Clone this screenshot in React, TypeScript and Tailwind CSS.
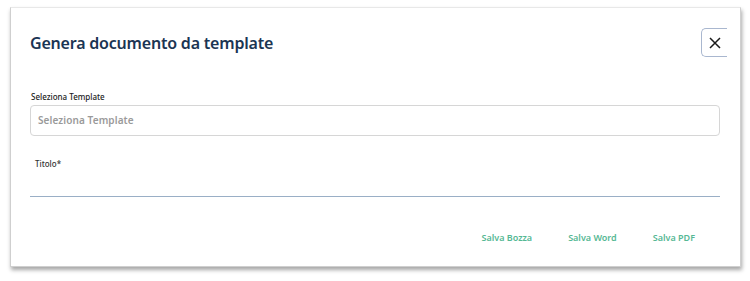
import React from 'react';

const font = { fontFamily: '"Noto Sans", "Open Sans", sans-serif' };

export default function App() {
  return (
    <div className="w-[750px] h-[281px] bg-white pt-[7px] pl-[10px]" style={font}>
      <div className="w-[731px] h-[260px] bg-white border border-[#cfcfcf] border-t-[#e8e8e8] shadow-[1px_3px_4px_rgba(0,0,0,0.35)] pl-[19px] pr-[20px] pt-[20px]">
        <div className="flex items-center justify-between h-[29px]">
          <h1 className="text-[16px] font-semibold text-[#1b3553] tracking-[-0.2px]">Genera documento da template</h1>
          <button className="w-[26px] h-[29px] mr-[-7px] border border-r-0 border-[#a9b7cf] rounded-l-[5px] flex items-center justify-center text-[#1a1a1a]">
            <svg width="12" height="12" viewBox="0 0 12 12" fill="none" stroke="currentColor" strokeWidth="1.5">
              <path d="M1 1 L11 11 M11 1 L1 11" />
            </svg>
          </button>
        </div>

        <div className="mt-[35px]">
          <label className="block text-[8px] font-medium text-[#222] leading-[10px] pl-[1px]">Seleziona Template</label>
          <div className="mt-[3px] h-[31px] border border-[#d6d6d6] rounded-[4px] flex items-center px-[7px]">
            <span className="text-[10px] font-semibold text-[#9a9a9a] tracking-[0.1px]">Seleziona Template</span>
          </div>
        </div>

        <div className="mt-[23px]">
          <label className="block text-[8px] font-medium text-[#333] leading-[10px] pl-[5px]">Titolo*</label>
          <div className="mt-[27px] h-px bg-[#9aafc6]" />
        </div>

        <div className="mt-[34px] flex justify-end gap-[36px] pr-[25px]">
          <button className="text-[9px] font-semibold text-[#56b894]">Salva Bozza</button>
          <button className="text-[9px] font-semibold text-[#56b894]">Salva Word</button>
          <button className="text-[9px] font-semibold text-[#56b894]">Salva PDF</button>
        </div>
      </div>
    </div>
  );
}
